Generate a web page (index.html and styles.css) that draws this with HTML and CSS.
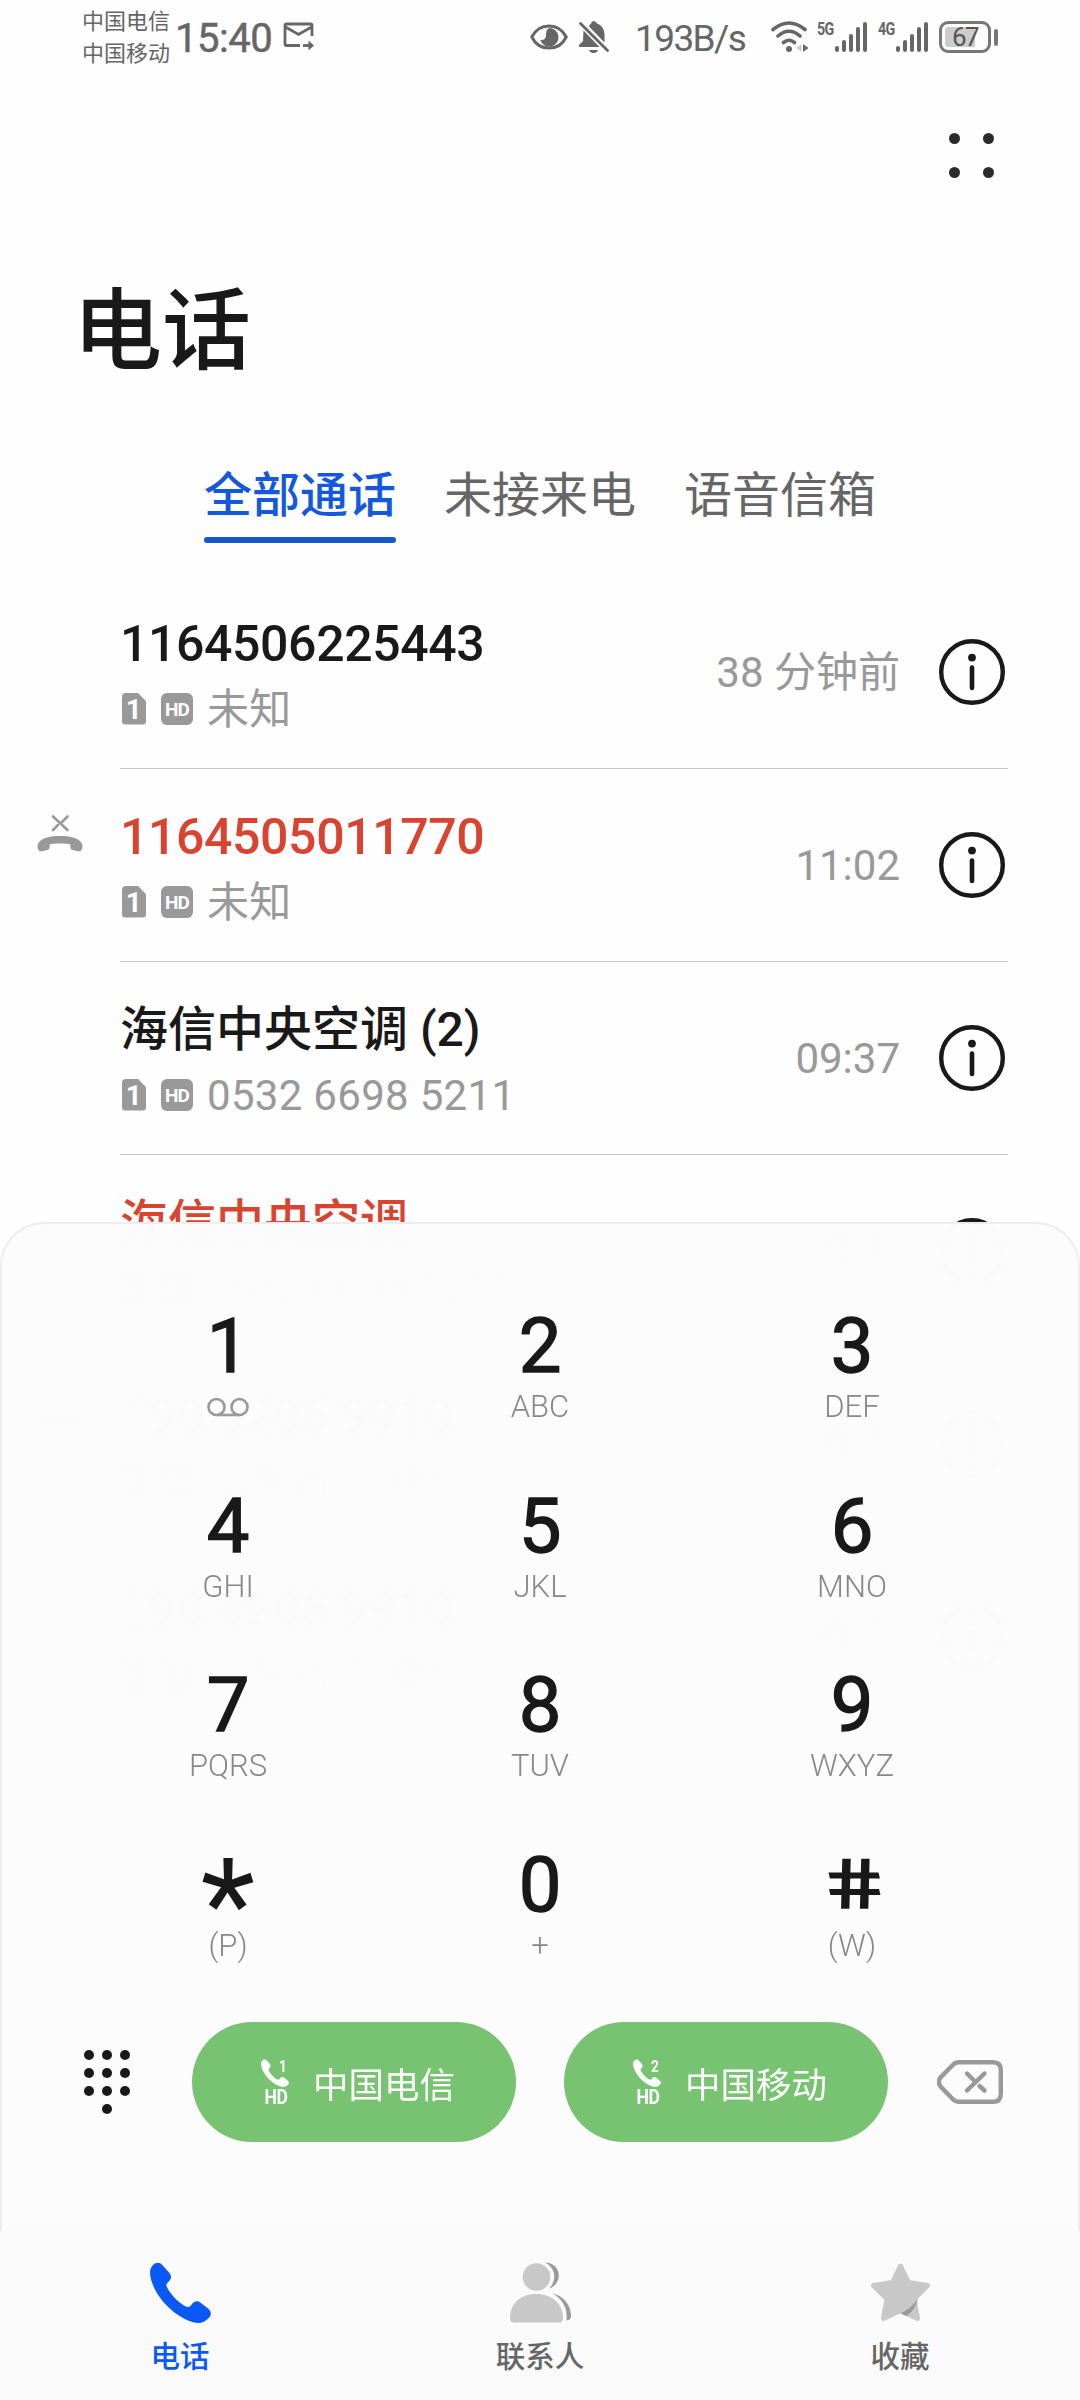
FILE: index.html
```
<!DOCTYPE html>
<html lang="zh-CN">
<head>
  <meta charset="UTF-8">
  <title>电话</title>
  <link rel="stylesheet" href="styles.css">
</head>
<body>
  <svg class="sprite" width="0" height="0">
    <symbol id="info" viewBox="0 0 66 66">
      <circle cx="33" cy="33" r="30.8" fill="none" stroke="currentColor" stroke-width="4.4"/>
      <circle cx="33" cy="18.6" r="3.9" fill="currentColor"/>
      <path d="M33 28.500V49" stroke="currentColor" stroke-width="4.6" stroke-linecap="round"/>
    </symbol>
    <symbol id="missed" viewBox="0 0 46 38">
      <path d="M16 2.500L30.500 16M30.500 2.500L25 8M21 11L16 16" fill="none" stroke="currentColor" stroke-width="2.600" stroke-linecap="round"/>
      <path d="M23 22C13 22 5.500 23.500 1.800 28.500C0 31 .2 34 1.500 36C2.500 37.500 4 37.300 6 37L9.500 36.300C11.500 35.900 12.600 34.800 12.700 33V30.300C16 29.200 30 29.200 33.300 30.300V33C33.400 34.800 34.500 35.900 36.500 36.300L40 37C42 37.300 43.500 37.500 44.500 36C45.800 34 46 31 44.200 28.500C40.500 23.500 33 22 23 22Z" fill="currentColor"/>
    </symbol>
    <symbol id="handset" viewBox="0 0 61 61">
      <path d="M3 3C6 0 10 .2 12.500 3.300L19 10.500C22 14 21.500 17 18.700 19.500C16 22 15.800 23.500 17.600 26.500C22.500 34.500 29.500 41.500 36 44.500C38.600 45.600 39.800 45 41.600 42.500C44.500 38.500 48 38.600 51 41L58 46.600C61.500 49.500 61.800 53 58.800 56C54.500 60.500 49 62.200 42.500 60C22 53.500 4.500 33.500 .6 15.500C-.6 10 0 6 3 3Z" fill="currentColor"/>
    </symbol>
  </svg>

  <header class="status-bar">
    <div class="carriers">
      <span>中国电信</span>
      <span>中国移动</span>
    </div>
    <span class="clock">15:40</span>
    <svg class="mail" width="32" height="28" viewBox="0 0 32 28" fill="none" stroke="currentColor" stroke-width="2.800">
      <path d="M17 23.500H3.500Q2 23.500 2 22V3.500Q2 2 3.500 2H27.500Q29 2 29 3.500V14M2.500 5L15.500 12.500L28.500 5"/>
      <path d="M20 23.500H27"/>
      <path d="M25.500 18.500L31 23.500L25.500 28.500Z" fill="currentColor" stroke="none"/>
    </svg>
    <div class="status-right">
      <svg class="eye" width="38" height="26" viewBox="0 0 38 26">
        <path d="M1.800 13C9-1.800 29-1.800 36.200 13C29 27.800 9 27.800 1.800 13Z" fill="none" stroke="currentColor" stroke-width="3"/>
        <path d="M19 4A9.300 9.300 0 1 1 10.300 16Q16.500 16.500 16 10Q16 6 19 4Z" fill="currentColor"/>
      </svg>
      <svg class="bell" width="30" height="33" viewBox="0 0 30 33">
        <path d="M14.500 0Q17 0 18 2.500Q25 5 25.500 13V21.500L10 5.500Q10 4 12 2.500Q12.500 0 14.500 0ZM4.500 9.500L20.500 26H0V24L4 20ZM10 29H19Q18 32 14.500 32Q11 32 10 29Z" fill="currentColor"/>
        <path d="M1.500 2.500L28.500 29.500" stroke="currentColor" stroke-width="2.800" stroke-linecap="round"/>
      </svg>
      <span class="speed">193B/s</span>
      <svg class="wifi" width="38" height="32" viewBox="0 0 38 32" fill="none" stroke="currentColor" stroke-width="3.600" stroke-linecap="round">
        <path d="M2 8.500Q18 -4.500 34 8.500M7 15Q18 5.500 29 15M12.500 21.500Q18 17 23.500 21.500"/>
        <circle cx="18" cy="28" r="3" fill="currentColor" stroke="none"/>
        <path d="M30.500 23.500L25 27L30.500 30.500Z" fill="#ccc" stroke="none"/>
        <path d="M32 23L37.500 27L32 31Z" fill="currentColor" stroke="none"/>
      </svg>
      <div class="signal">
        <span class="net">5G</span>
        <i></i><i></i><i></i><i></i><i></i>
      </div>
      <div class="signal">
        <span class="net">4G</span>
        <i></i><i></i><i></i><i></i><i></i>
      </div>
      <div class="battery"><span>67</span></div>
      <div class="battery-tip"></div>
    </div>
  </header>

  <div class="toolbar">
    <div class="more"><i></i><i></i><i></i><i></i></div>
  </div>

  <h1>电话</h1>

  <nav class="tabs">
    <a class="tab active">全部通话</a>
    <a class="tab">未接来电</a>
    <a class="tab">语音信箱</a>
  </nav>

  <main class="calls">
    <div class="call">
      <div class="who">
        <div class="name">1164506225443</div>
        <div class="sub"><b class="sim">1</b><b class="hd">HD</b>未知</div>
      </div>
      <span class="time">38 分钟前</span>
      <svg class="info"><use href="#info"/></svg>
    </div>
    <div class="call missed">
      <svg class="type"><use href="#missed"/></svg>
      <div class="who">
        <div class="name">1164505011770</div>
        <div class="sub"><b class="sim">1</b><b class="hd">HD</b>未知</div>
      </div>
      <span class="time">11:02</span>
      <svg class="info"><use href="#info"/></svg>
    </div>
    <div class="call">
      <div class="who">
        <div class="name cn">海信中央空调 (2)</div>
        <div class="sub"><b class="sim">1</b><b class="hd">HD</b>0532 6698 5211</div>
      </div>
      <span class="time">09:37</span>
      <svg class="info"><use href="#info"/></svg>
    </div>
    <div class="call missed">
      <div class="who">
        <div class="name cn">海信中央空调</div>
        <div class="sub"><b class="sim">1</b><b class="hd">HD</b>0532 6698 5211</div>
      </div>
      <span class="time">昨天</span>
      <svg class="info"><use href="#info"/></svg>
    </div>
    <div class="call">
      <svg class="type"><use href="#missed"/></svg>
      <div class="who">
        <div class="name">190 5206 9910</div>
        <div class="sub"><b class="sim">1</b><b class="hd">HD</b>山东青岛 电信</div>
      </div>
      <span class="time">昨天</span>
      <svg class="info"><use href="#info"/></svg>
    </div>
    <div class="call">
      <div class="who">
        <div class="name">190 5206 9910</div>
        <div class="sub"><b class="sim">1</b><b class="hd">HD</b>山东青岛 电信</div>
      </div>
      <span class="time">昨天</span>
      <svg class="info"><use href="#info"/></svg>
    </div>
  </main>

  <section class="dialpad">
    <div class="keys">
      <div class="key"><span class="digit">1</span>
        <svg class="voicemail" width="42" height="20" viewBox="0 0 42 20" fill="none" stroke="currentColor" stroke-width="2.600">
          <circle cx="9.500" cy="10" r="8"/>
          <circle cx="32.500" cy="10" r="8"/>
          <path d="M9.500 18H32.500"/>
        </svg>
      </div>
      <div class="key"><span class="digit">2</span><span class="letters">ABC</span></div>
      <div class="key"><span class="digit">3</span><span class="letters">DEF</span></div>
      <div class="key"><span class="digit">4</span><span class="letters">GHI</span></div>
      <div class="key"><span class="digit">5</span><span class="letters">JKL</span></div>
      <div class="key"><span class="digit">6</span><span class="letters">MNO</span></div>
      <div class="key"><span class="digit">7</span><span class="letters">PQRS</span></div>
      <div class="key"><span class="digit">8</span><span class="letters">TUV</span></div>
      <div class="key"><span class="digit">9</span><span class="letters">WXYZ</span></div>
      <div class="key"><span class="digit star">*</span><span class="letters">(P)</span></div>
      <div class="key"><span class="digit">0</span><span class="letters">+</span></div>
      <div class="key"><span class="digit hash">#</span><span class="letters">(W)</span></div>
    </div>
    <div class="actions">
      <div class="pad-toggle"><i></i><i></i><i></i><i></i><i></i><i></i><i></i><i></i><i></i><i></i></div>
      <button class="dial">
        <span class="dial-icon">
          <svg width="28" height="28"><use href="#handset"/></svg>
          <em>1</em><strong>HD</strong>
        </span>中国电信
      </button>
      <button class="dial">
        <span class="dial-icon">
          <svg width="28" height="28"><use href="#handset"/></svg>
          <em>2</em><strong>HD</strong>
        </span>中国移动
      </button>
      <svg class="backspace" width="66" height="44" viewBox="0 0 66 44" fill="none" stroke="currentColor" stroke-width="4.400" stroke-linecap="round" stroke-linejoin="round">
        <path d="M22 2.200H56Q63.800 2.200 63.800 10V34Q63.800 41.800 56 41.800H22Q18.500 41.800 16 39.300L4 27Q-.5 22 4 17L16 4.700Q18.500 2.200 22 2.200Z"/>
        <path d="M30 13.500L36.500 20M42.500 26L47.500 30.500M47.500 13.500L30 30.500"/>
      </svg>
    </div>
  </section>

  <nav class="bottom-nav">
    <a class="nav-item active">
      <svg width="61" height="61"><use href="#handset"/></svg>
      <span>电话</span>
    </a>
    <a class="nav-item">
      <svg width="61" height="61" viewBox="0 0 61 61">
        <circle cx="26.500" cy="15" r="13.800" fill="#c8c8c8"/>
        <path d="M0 56C0 42 10 32 26 32S53 42 53 56Q53 60.500 49 60.500H4Q0 60.500 0 56Z" fill="#c8c8c8"/>
        <path d="M35 .5C52 1 53 22 39.500 26.500C47 18 46 6 35 .5ZM41.500 31C54 34 61 43 61 54Q61 58 56.500 58.500C58 46 52 36 41.500 31Z" fill="#999"/>
      </svg>
      <span>联系人</span>
    </a>
    <a class="nav-item">
      <svg width="61" height="61" viewBox="0 0 61 61">
        <path d="M30.500 4L38.500 20.500L57.500 23.500L44 37L47.500 56.500L30.500 48.500L13.500 56.500L17 37L3.500 23.500L22.500 20.500Z" fill="#c8c8c8" stroke="#c8c8c8" stroke-width="5" stroke-linejoin="round"/>
        <path d="M48 36C44 43 38 48 30.500 51.500L36.500 54C42 50 46 45 48 36Z" fill="#999"/>
      </svg>
      <span>收藏</span>
    </a>
  </nav>
</body>
</html>
```
FILE: styles.css
```
* {
  box-sizing: border-box;
}
body {
  margin: 0;
  width: 1080px;
  height: 2400px;
  position: relative;
  overflow: hidden;
  background-color: #fefefe;
  color: #191919;
  font-family: Roboto, "Noto Sans CJK SC", sans-serif;
}
.sprite {
  position: absolute;
}
svg {
  display: block;
  flex: none;
}

/* status bar */
.status-bar {
  height: 74px;
  padding: 0 82px 0 82px;
  display: flex;
  align-items: center;
  color: #666;
}
.carriers {
  width: 93px;
  padding-top: 2px;
  font-size: 22px;
  line-height: 32px;
}
.carriers span {
  display: block;
}
.clock {
  width: 108px;
  padding-top: 2px;
  font-size: 40px;
  letter-spacing: -0.5px;
  -webkit-text-stroke: 0.5px #666;
}
.mail {
  margin-bottom: 2px;
}
.status-right {
  margin-left: auto;
  display: flex;
  align-items: center;
}
.bell {
  margin-left: 11px;
}
.speed {
  width: 162px;
  padding: 2px 0 0 26px;
  font-size: 37px;
  letter-spacing: -1.6px;
}
.wifi {
  margin-right: 8px;
}
.signal {
  width: 49px;
  height: 30px;
  margin-right: 12px;
  display: flex;
  align-items: flex-end;
  gap: 3px;
}
.signal .net {
  width: 15px;
  align-self: flex-start;
  font-size: 19px;
  line-height: 14px;
  font-weight: 700;
  letter-spacing: -1px;
  transform: scaleX(0.75);
  transform-origin: left;
}
.signal i {
  width: 4px;
  flex: none;
  height: 6px;
  border-radius: 2px;
  background-color: #666;
}
.signal i:nth-of-type(2) { height: 12px; }
.signal i:nth-of-type(3) { height: 18px; }
.signal i:nth-of-type(4) { height: 25px; }
.signal i:nth-of-type(5) { height: 30px; }
.battery {
  width: 52px;
  height: 32px;
  padding: 3px;
  border: 3px solid #777;
  border-radius: 9px;
  background: linear-gradient(to right, #ccc 30px, #fefefe 30px) content-box;
}
.battery span {
  display: block;
  font-size: 26px;
  line-height: 21px;
  letter-spacing: -1.5px;
  text-align: center;
  color: #555;
}
.battery-tip {
  width: 4px;
  height: 17px;
  margin-left: 3px;
  border-radius: 2px;
  background-color: #777;
}

/* title and tabs */
.toolbar {
  height: 164px;
  padding: 59px 86px 0 0;
  display: flex;
  justify-content: flex-end;
}
.more {
  display: grid;
  grid-template-columns: 11px 11px;
  gap: 23px 23px;
  align-content: start;
}
.more i {
  width: 11px;
  height: 11px;
  border-radius: 50%;
  background-color: #2b2b2b;
}
h1 {
  margin: 0;
  padding: 34px 0 0 73px;
  height: 213px;
  font-size: 89px;
  line-height: 120px;
  font-weight: 500;
}
.tabs {
  height: 125px;
  display: flex;
  justify-content: center;
  gap: 48px;
}
.tab {
  height: 92px;
  padding-top: 15px;
  font-size: 48px;
  line-height: 60px;
  color: #666;
}
.tab.active {
  font-weight: 500;
  color: #1459dc;
}
.tab.active::after {
  content: "";
  display: block;
  height: 6px;
  margin-top: 11px;
  border-radius: 3px;
  background-color: #1459cc;
}

/* call log */
.calls {
  padding: 0 72px 0 120px;
}
.call {
  position: relative;
  height: 193px;
  display: flex;
  align-items: center;
  border-bottom: 1px solid #c8c8c8;
}
.who {
  flex: 1;
  padding-top: 11px;
}
.name {
  font-size: 50px;
  line-height: 64px;
  font-weight: 500;
  letter-spacing: -0.4px;
  white-space: nowrap;
}
.name.cn {
  font-size: 48px;
  letter-spacing: 0;
}
.missed .name {
  color: #d9432f;
}
.sub {
  display: flex;
  align-items: center;
  font-size: 42px;
  line-height: 67px;
  letter-spacing: 0.3px;
  color: #999;
}
.sim,
.hd {
  height: 32px;
  margin-bottom: 2px;
  color: #fff;
  background-color: #999;
  text-align: center;
  line-height: 33px;
}
.sim {
  width: 24px;
  margin-left: 2px;
  margin-right: 15px;
  border-radius: 4px;
  clip-path: polygon(0 0, 65% 0, 100% 27%, 100% 100%, 0 100%);
  font-size: 28px;
}
.hd {
  width: 32px;
  margin-right: 14px;
  border-radius: 6px;
  font-size: 19px;
  letter-spacing: -1px;
}
.time {
  margin-right: 39px;
  padding-top: 2px;
  font-size: 42px;
  line-height: 60px;
  color: #999;
}
.info {
  width: 66px;
  height: 66px;
  margin-right: 3px;
}
.type {
  position: absolute;
  left: -83px;
  top: 45px;
  width: 46px;
  height: 38px;
  color: #999;
}

/* dial pad slides over the call log */
.dialpad {
  position: absolute;
  left: 0;
  top: 1222px;
  width: 1080px;
  height: 1010px;
  padding-top: 82px;
  border: 2px solid #ededed;
  border-bottom: none;
  border-radius: 44px 44px 0 0;
  background-color: rgba(252, 252, 252, 0.99);
  backdrop-filter: blur(2px);
}
.keys {
  padding: 0 70px;
  display: grid;
  grid-template-columns: repeat(3, 1fr);
  grid-auto-rows: 179.500px;
}
.key {
  display: flex;
  flex-direction: column;
  align-items: center;
}
.digit {
  height: 78px;
  font-size: 76px;
  line-height: 81px;
  -webkit-text-stroke: 1.4px #191919;
}
.star {
  font-size: 126px;
  line-height: 120px;
  -webkit-text-stroke: 0;
}
.hash {
  transform: scale(1.25, 0.9) skewX(10deg);
}
.letters {
  font-size: 31px;
  line-height: 46px;
  font-weight: 300;
  color: #888;
}
.voicemail {
  margin-top: 13px;
  color: #999;
}
.actions {
  height: 120px;
  margin-top: -2px;
  padding: 0 73px 0 82px;
  display: flex;
  align-items: center;
}
.pad-toggle {
  width: 108px;
  display: grid;
  grid-template-columns: repeat(3, 10px);
  gap: 8px;
}
.pad-toggle i {
  width: 10px;
  height: 10px;
  border-radius: 50%;
  background-color: #191919;
}
.pad-toggle i:last-child {
  grid-column: 2;
}
.dial {
  width: 324px;
  height: 120px;
  margin-right: 48px;
  padding: 0 0 0 69px;
  display: flex;
  align-items: center;
  border: none;
  border-radius: 60px;
  background-color: #78c371;
  color: #fff;
  font-family: inherit;
  font-size: 35.500px;
}
.dial-icon {
  position: relative;
  width: 30px;
  height: 46px;
  margin-right: 22px;
}
.dial-icon em {
  position: absolute;
  right: 3px;
  top: -1px;
  font-size: 17px;
  line-height: 17px;
  font-style: normal;
  font-weight: 700;
  transform: scaleX(0.8);
}
.dial-icon strong {
  display: block;
  padding-left: 4px;
  font-size: 20px;
  line-height: 20px;
  letter-spacing: -0.5px;
  text-align: left;
  transform: scaleX(0.88);
  transform-origin: left;
}
.backspace {
  margin-left: 1px;
  color: #999;
}

/* bottom navigation */
.bottom-nav {
  position: absolute;
  left: 0;
  bottom: 0;
  width: 1080px;
  height: 169px;
  display: flex;
  background-color: #fafafa;
}
.nav-item {
  flex: 1;
  padding-top: 31px;
  display: flex;
  flex-direction: column;
  align-items: center;
  color: #666;
}
.nav-item span {
  margin-top: 12px;
  font-size: 29.500px;
  line-height: 44px;
  font-weight: 500;
}
.nav-item.active {
  color: #0a59f7;
}
```
